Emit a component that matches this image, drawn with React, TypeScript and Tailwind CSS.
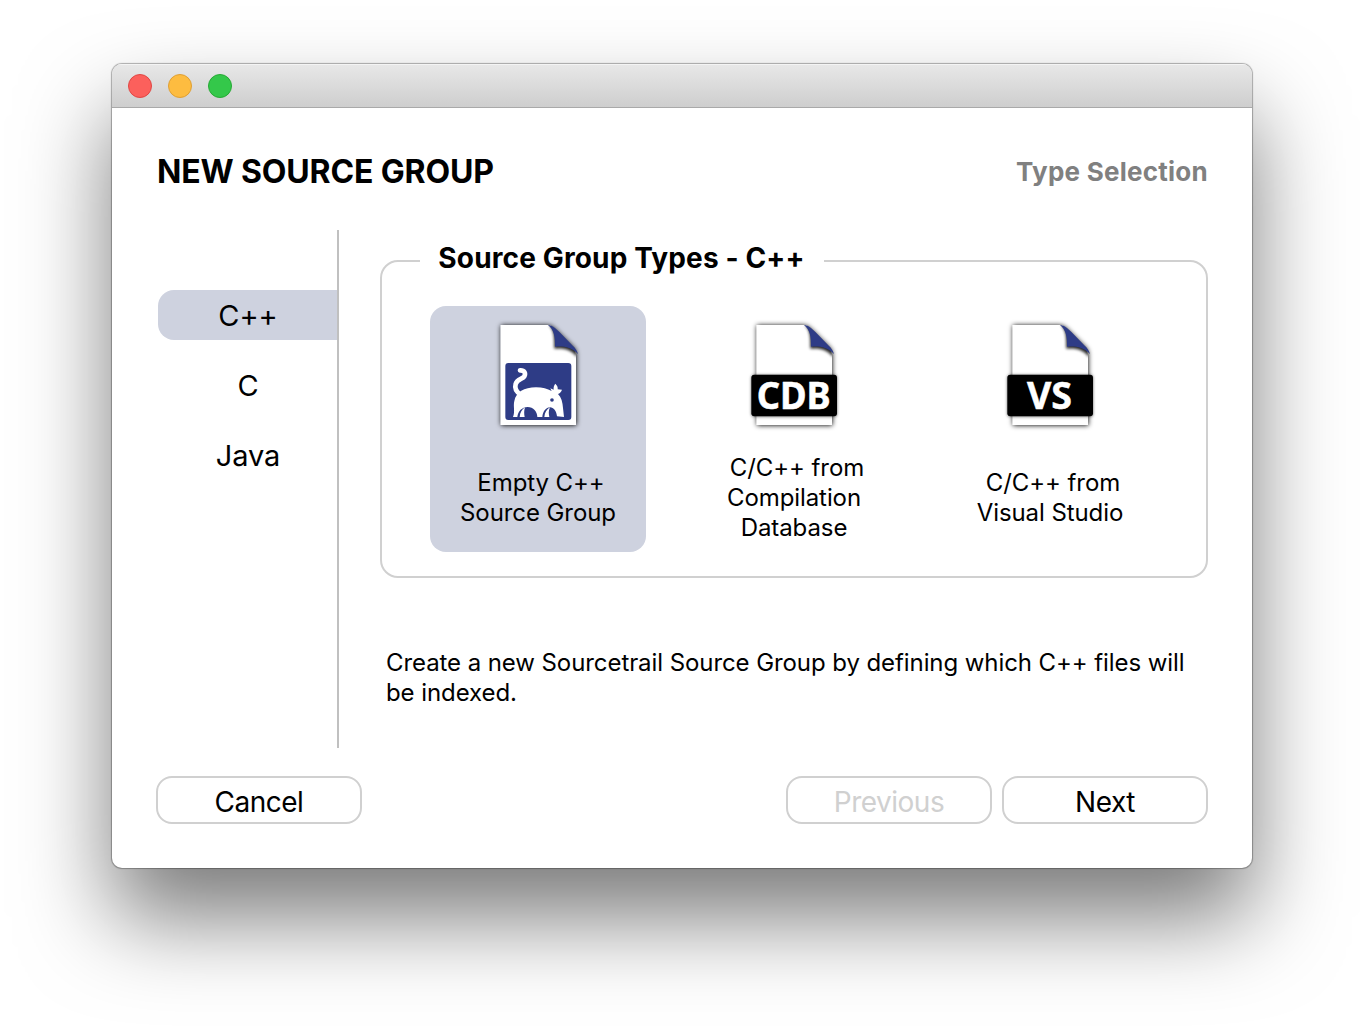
import type { ReactNode } from 'react';

const languages = ['C++', 'C', 'Java'];

function FileIcon({ children }: { children: ReactNode }) {
  return (
    <svg viewBox="0 0 288 390" className="block h-[130px] w-24 overflow-visible">
      <defs>
        <filter id="pageShadow" x="-20%" y="-20%" width="140%" height="140%">
          <feDropShadow dx="1" dy="1" stdDeviation="8" floodColor="#000" floodOpacity="1" />
        </filter>
        <filter id="bannerShadow" x="-20%" y="-20%" width="140%" height="140%">
          <feDropShadow dx="0" dy="1" stdDeviation="4" floodColor="#000" floodOpacity="0.6" />
        </filter>
        <filter id="foldShadow" x="-30%" y="-30%" width="160%" height="160%">
          <feGaussianBlur stdDeviation="4" />
        </filter>
        <clipPath id="pageClip">
          <path d="M32 45H172C186 46 193 56 206 68L247 109C254 116 258 121 258 132V345H32Z" />
        </clipPath>
      </defs>
      <path
        d="M32 45H172C186 46 193 56 206 68L247 109C254 116 258 121 258 132V345H32Z"
        fill="#fff"
        filter="url(#pageShadow)"
      />
      <g clipPath="url(#pageClip)">
        <path d="M176 45C194 60 193 84 193 116C220 113 245 118 262 142L262 70Z" fill="#000" opacity="0.85" filter="url(#foldShadow)" />
      </g>
      <path d="M174 45C192 59 196 82 195 110C218 108 243 110 264 132C260 119 256 115 249 108L209 67C196 54 188 46 174 45Z" fill="#2e3c86" />
      {children}
    </svg>
  );
}

function Aardvark() {
  return (
    <>
      <rect x="46" y="159" width="198" height="171" rx="9" fill="#2e3c86" />
      <path
        d="M90 181C103 180 108 190 103 199C97 208 82 207 77 222C73 235 80 247 94 256"
        fill="none"
        stroke="#fff"
        strokeWidth="14"
        strokeLinecap="round"
      />
      <path
        d="M69 321C76 304 69 290 73 273C78 247 102 232 138 232C158 232 172 237 185 243L181 235L191 239C190 231 192 226 196 221C202 227 204 232 203 238L216 239C214 246 209 250 204 252C214 262 218 277 219 294L222 321L201 319C199 303 191 292 180 292C168 292 158 305 157 321H142C142 305 130 291 113 291C96 291 84 304 82 321Z"
        fill="#fff"
      />
      <path d="M89 321C90 308 96 298 105 292C102 302 102 311 104 321ZM163 321C164 308 170 298 180 292C175 303 176 311 178 321Z" fill="#fff" />
      <circle cx="186" cy="270" r="5.5" fill="#2e3c86" />
    </>
  );
}

function Banner({ label, x, width }: { label: string; x: number; width: number }) {
  return (
    <>
      <rect x="16" y="194" width="257" height="125" rx="9" fill="#000" filter="url(#bannerShadow)" />
      <text
        x={x}
        y="298"
        textLength={width}
        lengthAdjust="spacingAndGlyphs"
        fill="#fff"
        stroke="#fff"
        strokeWidth="1.5"
        fontSize="114"
        fontWeight="700"
        fontFamily="'Noto Sans', sans-serif"
      >
        {label}
      </text>
    </>
  );
}

function TypeCard({ icon, lines, selected }: { icon: ReactNode; lines: string[]; selected?: boolean }) {
  return (
    <button
      className={
        'flex h-[246px] w-[216px] flex-col items-center rounded-2xl pt-1 text-2xl leading-[30px] tracking-[-0.08px] ' +
        (selected ? 'bg-[#ced2df]' : '')
      }
    >
      <FileIcon>{icon}</FileIcon>
      <span className="flex h-[116px] shrink-0 flex-col items-center justify-center">
        {lines.map((line, i) => (
          <span key={line} className={i === 0 ? 'pl-1.5' : ''}>
            {line}
          </span>
        ))}
      </span>
    </button>
  );
}

function DialogButton({ label, disabled }: { label: string; disabled?: boolean }) {
  return (
    <button
      disabled={disabled}
      className={
        'flex h-12 w-[206px] items-center justify-center rounded-2xl border-2 border-[#d0d0d0] bg-white pt-1 text-[28px] leading-none tracking-[-0.5px] ' +
        (disabled ? 'text-[#d0d0d0]' : 'text-black')
      }
    >
      {label}
    </button>
  );
}

export default function App() {
  return (
    <div className="h-[1028px] w-[1364px] overflow-hidden bg-white pt-16 pl-28 font-['Inter',sans-serif] text-black">
      <div className="flex h-[804px] w-[1140px] flex-col overflow-hidden rounded-[10px] bg-white shadow-[0_0_1px_1px_rgba(0,0,0,0.3),0_50px_90px_rgba(0,0,0,0.52)]">
        <header className="flex h-11 shrink-0 items-center gap-4 border-b border-[#a9a9a9] bg-gradient-to-b from-[#e8e8e8] to-[#cecece] pt-px pl-4 shadow-[inset_0_1px_0_#f4f4f4]">
          <span className="size-6 rounded-full border border-[#df4744] bg-[#fc605c]" />
          <span className="size-6 rounded-full border border-[#de9f34] bg-[#fdbc40]" />
          <span className="size-6 rounded-full border border-[#27a935] bg-[#34c84a]" />
        </header>
        <main className="flex flex-1 flex-col pr-11 pl-11">
          <div className="flex h-[122px] items-center justify-between pt-1">
            <h1 className="pt-0.5 pl-px text-[32px] font-bold tracking-[-0.15px]">NEW SOURCE GROUP</h1>
            <h2 className="text-[26px] font-bold tracking-[0.25px] text-[#808080]">Type Selection</h2>
          </div>
          <div className="flex h-[518px]">
            <nav className="flex w-[183px] flex-col gap-5 border-r-2 border-[#c0c0c0] pt-[60px] pl-0.5">
              {languages.map((name, i) => (
                <button
                  key={name}
                  className={
                    'flex h-[50px] items-center justify-center rounded-l-2xl pl-px text-[29px] leading-none tracking-[-0.1px] ' +
                    (i === 0 ? 'bg-[#ced2df]' : '')
                  }
                >
                  {name}
                </button>
              ))}
            </nav>
            <section className="ml-[41px] w-[828px] pt-[30px]">
              <div className="h-[318px] rounded-[18px] border-2 border-[#d0d0d0] px-12">
                <h3 className="-mt-[23px] -ml-2.5 h-10 w-[404px] bg-white pr-px text-center text-[28px] leading-[39px] font-bold tracking-[0.14px]">
                  Source Group Types - C++
                </h3>
                <div className="mt-[27px] flex gap-10">
                  <TypeCard icon={<Aardvark />} lines={['Empty C++', 'Source Group']} selected />
                  <TypeCard icon={<Banner label="CDB" x={32} width={222} />} lines={['C/C++ from', 'Compilation', 'Database']} />
                  <TypeCard icon={<Banner label="VS" x={75} width={135} />} lines={['C/C++ from', 'Visual Studio']} />
                </div>
              </div>
              <p className="mt-[70px] pl-1.5 text-2xl leading-[30px] tracking-[-0.08px]">
                Create a new Sourcetrail Source Group by defining which C++ files will
                <br />
                be indexed.
              </p>
            </section>
          </div>
          <footer className="mt-7 flex gap-2.5">
            <DialogButton label="Cancel" />
            <span className="flex-1" />
            <DialogButton label="Previous" disabled />
            <DialogButton label="Next" />
          </footer>
        </main>
      </div>
    </div>
  );
}
